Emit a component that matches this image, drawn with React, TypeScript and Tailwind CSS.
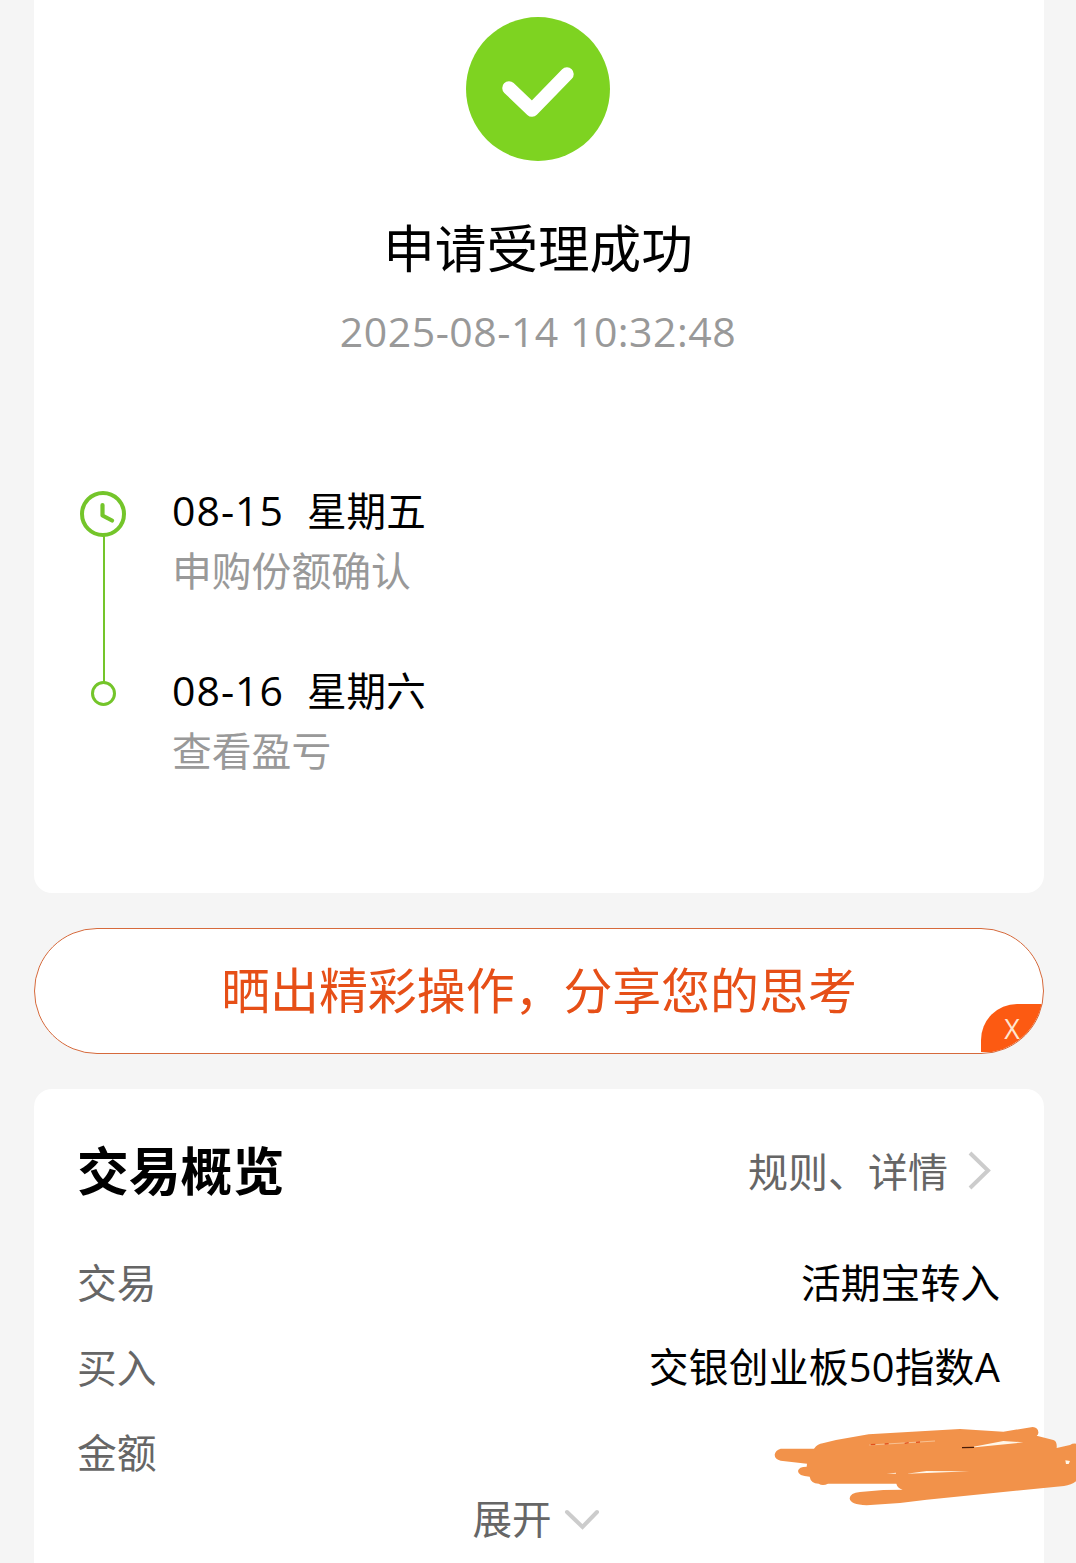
import { ReactNode } from "react";

const steps = [
    { date: "08-15", day: "星期五", text: "申购份额确认" },
    { date: "08-16", day: "星期六", text: "查看盈亏" },
];

function Num({ children }: { children: ReactNode }) {
    return <span className="font-['Open_Sans','Noto_Sans_CJK_SC',sans-serif]">{children}</span>;
}

function Row({ label, children }: { label: string; children?: ReactNode }) {
    return (
        <div className="flex h-[85px] items-center justify-between text-[39.8px] leading-[60px]">
            <span className="-ml-px text-[#666]">{label}</span>
            <span className="text-black">{children}</span>
        </div>
    );
}

function Timeline() {
    return (
        <svg className="h-[220px] w-[50px]" viewBox="0 0 50 220" fill="none" stroke="#74c52a">
            <path d="M26 48V195" strokeWidth="2" />
            <circle cx="25" cy="26" r="21" strokeWidth="4" />
            <path d="M24.500 17V27.500L34 32.500" strokeWidth="4.2" strokeLinecap="round" strokeLinejoin="round" />
            <circle cx="25.5" cy="205.5" r="11" strokeWidth="3" fill="#fff" />
        </svg>
    );
}

// hand drawn marker that hides the amount
function Scribble() {
    return (
        <svg className="absolute top-[321px] left-[726px] h-[110px] w-[316px]" viewBox="0 0 948 330">
            <path
                fill="#f2924a"
                d="M62 116L162 116Q174 101 188 100L228 90L326 73L600 57L730 65L818 51Q834 52 835 66Q836 74 830 77L880 90Q892 94 890 114L930 105Q938 100 948 101V214Q934 225 912 228L500 269L420 279L320 286Q270 284 269 265Q270 249 300 246L370 240L428 239Q412 234 409 221L204 221Q188 229 176 221Q152 220 149 200Q114 198 114 183Q116 170 140 170L141 161L62 152Q44 147 44 134Q46 120 62 116Z"
            />
            <path fill="#fff6e8" d="M640 110L730 93L790 97L645 112ZM440 191L500 183L628 184L520 188ZM380 191L408 188V191ZM916 151L930 153L926 162H918Z" />
            <path fill="none" stroke="#fbd9b8" strokeWidth="2" d="M328 105L430 99L525 93" />
            <path fill="none" stroke="#e2501c" strokeWidth="4" d="M332 104L346 103M374 102L386 101M434 100L446 98M468 97L480 96" />
            <path fill="none" stroke="#4a1c08" strokeWidth="4" d="M606 113L642 112" />
        </svg>
    );
}

function App() {
    return (
        <div className="h-[1563px] w-[1076px] overflow-hidden bg-[#f5f5f5] pr-8 pl-[34px] font-['Noto_Sans_CJK_SC',sans-serif]">
            <div className="h-[893px] rounded-b-[18px] bg-white pt-4">
                <svg className="mx-auto h-[146px] w-[146px]" viewBox="0 0 146 146" fill="none">
                    <circle cx="72" cy="73" r="72" fill="#7ed321" />
                    <path d="M43 72L66 94L101 58" stroke="#fff" strokeWidth="13.5" strokeLinecap="round" strokeLinejoin="round" />
                </svg>
                <div className="mt-[49px] pr-[2px] text-center text-[51.6px] leading-[70px] text-black">申请受理成功</div>
                <div className="mt-[23px] pr-[2px] text-center text-[41px] leading-[50px] tracking-[0.5px] text-[#999]">
                    <Num>2025-08-14 10:32:48</Num>
                </div>
                <div className="mt-[123px] flex pl-11">
                    <div className="mt-[9px] w-[50px]">
                        <Timeline />
                    </div>
                    <div className="ml-[44px] flex flex-col gap-[60px]">
                        {steps.map((s) => (
                            <div key={s.date}>
                                <div className="flex h-[60px] items-center text-[39.6px] leading-[60px] text-black">
                                    <span className="w-[135px] text-[41px] tracking-[1px]">
                                        <Num>{s.date}</Num>
                                    </span>
                                    <span>{s.day}</span>
                                </div>
                                <div className="text-[39.8px] leading-[60px] text-[#999]">{s.text}</div>
                            </div>
                        ))}
                    </div>
                </div>
            </div>

            <div className="relative mt-[35px] flex h-[126px] items-center justify-center overflow-hidden rounded-full border-[1.5px] border-[#d66a3c] bg-white">
                <span className="mb-[7px] text-[48.9px] leading-[70px] text-[#e64f17]">晒出精彩操作，分享您的思考</span>
                <button className="absolute right-0 bottom-[1px] flex h-[48px] w-[62px] items-center justify-center rounded-tl-[36px] bg-[#fc5a12] text-[27px] leading-none text-[#ffe6d0]">
                    <Num>X</Num>
                </button>
            </div>

            <div className="relative mt-[35px] h-[480px] rounded-t-[18px] bg-white px-11 pt-[44px]">
                <div className="flex h-[72px] items-center justify-between">
                    <h2 className="-ml-px text-[51.8px] leading-[72px] font-bold text-black">交易概览</h2>
                    <div className="flex items-center pr-2">
                        <span className="mt-[2px] text-[40px] leading-[60px] text-[#666]">规则、详情</span>
                        <svg className="mt-[2px] ml-[20px] h-10 w-6" viewBox="0 0 24 40" fill="none" stroke="#ccc" strokeWidth="4">
                            <path d="M2 3L20 20.500L2 38" />
                        </svg>
                    </div>
                </div>
                <div className="mt-[33px]">
                    <Row label="交易">活期宝转入</Row>
                    <Row label="买入">
                        <span className="tracking-[0.2px]">
                            交银创业板<Num>50</Num>指数<Num>A</Num>
                        </span>
                    </Row>
                    <Row label="金额" />
                </div>
                <div className="-mt-[6px] flex items-center justify-center pr-[6px] text-[39.6px] leading-[60px] text-[#666]">
                    展开
                    <svg className="mt-[6px] ml-3 h-6 w-9" viewBox="0 0 36 24" fill="none" stroke="#ccc" strokeWidth="4" strokeLinecap="round">
                        <path d="M3 4L18.500 19L33 4" />
                    </svg>
                </div>
                <Scribble />
            </div>
        </div>
    );
}

export default App;
